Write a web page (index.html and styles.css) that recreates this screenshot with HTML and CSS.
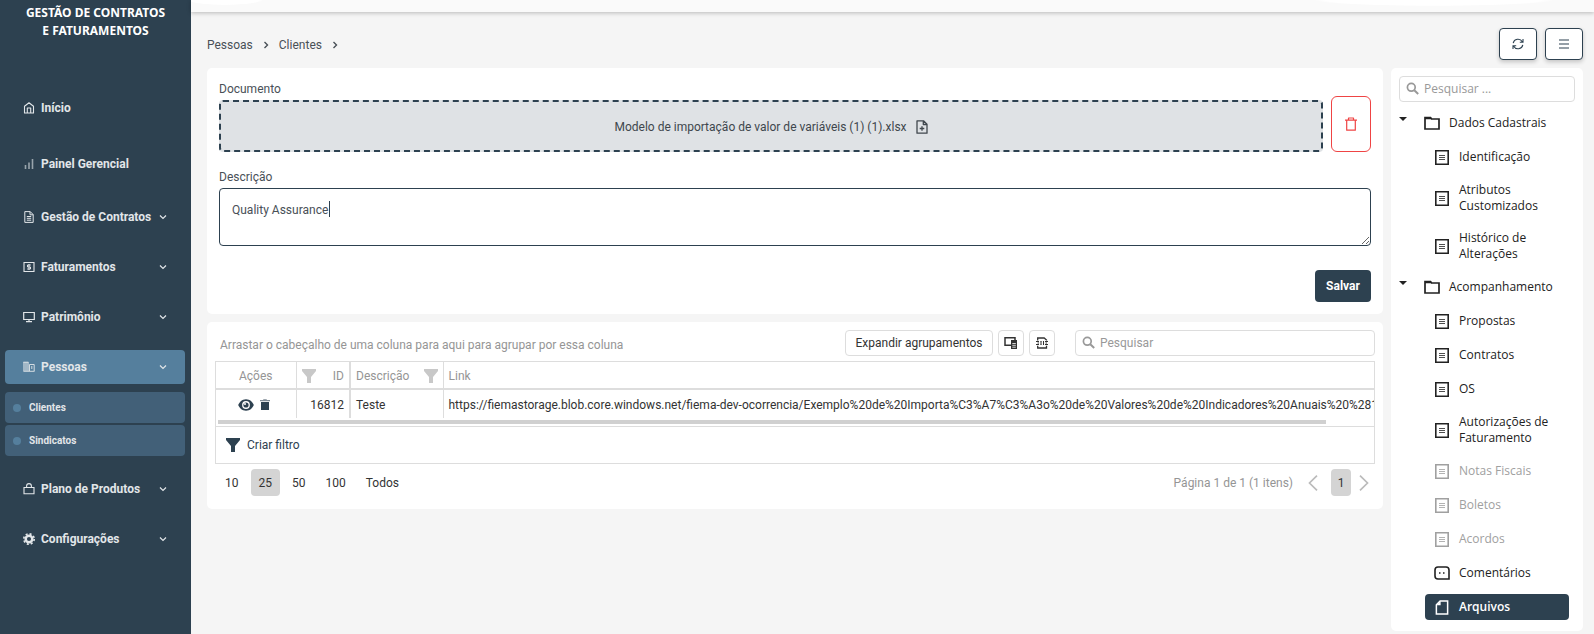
FILE: index.html
```html
<!DOCTYPE html>
<html lang="pt-BR">
<head>
<meta charset="utf-8">
<title>Gestão de Contratos e Faturamentos</title>
<link rel="stylesheet" href="styles.css">
</head>
<body>
<svg class="sprite" aria-hidden="true">
  <symbol id="chev" viewBox="0 0 10 10"><path d="M2 3.500 5 6.500 8 3.500" fill="none" stroke="currentColor" stroke-width="1.200"/></symbol>
  <symbol id="search" viewBox="0 0 14 14"><circle cx="5.300" cy="5.300" r="3.900" fill="none" stroke="currentColor" stroke-width="1.700"/><path d="M8.300 8.300 12.200 12" stroke="currentColor" stroke-width="2"/></symbol>
  <symbol id="funnel" viewBox="0 0 14 14"><path d="M0 0h14v2L9 8v6H5V8L0 2z" fill="currentColor"/></symbol>
  <symbol id="folder" viewBox="0 0 16 14"><path d="M1 1.500h5.500l1.200 1.500H15v10H1z" fill="none" stroke="currentColor" stroke-width="1.700"/><path d="M1 1h5.500l1.500 2.300H1z" fill="currentColor"/></symbol>
  <symbol id="doc" viewBox="0 0 14 15"><path d="M.8.8h12.400v13.400H.8z" fill="none" stroke="currentColor" stroke-width="1.600"/><path d="M4 5.500h6M4 7.500h6M4 9.500h6" stroke="currentColor" stroke-width=".8"/></symbol>
</svg>
<div class="app">
  <aside class="sidebar">
    <h1 class="brand">GESTÃO DE CONTRATOS<br>E FATURAMENTOS</h1>
    <nav class="menu">
      <a class="item tall" href="#"><svg class="ico" viewBox="0 0 12 12"><path d="M1.500 11V4.300L6 .8l4.500 3.500V11zM4.300 11V6h3.400v5" fill="none" stroke="currentColor" stroke-width="1.100" stroke-linejoin="round"/></svg><span>Início</span></a>
      <a class="item tall" href="#"><svg class="ico dim" viewBox="0 0 12 12"><path d="M2.500 7v4M6 4.500V11M9.500 1v10" stroke="currentColor" stroke-width="1.600"/></svg><span>Painel Gerencial</span></a>
      <a class="item" href="#"><svg class="ico" viewBox="0 0 12 12"><path d="M1.800 .6h5.400l3 3v7.800H1.800zM7 .6v3.200h3.200M3.800 5.500h4.400M3.800 7.300h4.400M3.800 9.200h4.400" fill="none" stroke="currentColor" stroke-width="1"/></svg><span>Gestão de Contratos</span><svg class="chev"><use href="#chev"/></svg></a>
      <a class="item" href="#"><svg class="ico" viewBox="0 0 12 12"><path d="M1 1.500h10v9H1z" fill="none" stroke="currentColor" stroke-width="1.100"/><path d="M7.800 4H4.500v2h3v2H4.200M6 3v6" fill="none" stroke="currentColor" stroke-width="1"/></svg><span>Faturamentos</span><svg class="chev"><use href="#chev"/></svg></a>
      <a class="item" href="#"><svg class="ico" viewBox="0 0 12 12"><path d="M.7 1.500h10.600v7H.7zM6 8.500v2M3 10.700h6" fill="none" stroke="currentColor" stroke-width="1.200"/></svg><span>Patrimônio</span><svg class="chev"><use href="#chev"/></svg></a>
      <a class="item active" href="#"><svg class="ico" viewBox="0 0 12 12"><path d="M1 1v9M3 1v9M5 1v9" stroke="currentColor" stroke-width="1.100"/><path d="M.4 1.200h5M.4 10.300h11.200M6.500 10V3.500h4.700V10M8.800 5v3" fill="none" stroke="currentColor" stroke-width=".9"/></svg><span>Pessoas</span><svg class="chev"><use href="#chev"/></svg></a>
      <div class="sub">
        <a class="subitem" href="#">Clientes</a>
        <a class="subitem" href="#">Sindicatos</a>
      </div>
      <a class="item" href="#"><svg class="ico" viewBox="0 0 12 12"><path d="M1 4.500h10v6.300H1zM3.600 4.500V3a2.400 2.400 0 0 1 4.800 0v1.500" fill="none" stroke="currentColor" stroke-width="1.100"/></svg><span>Plano de Produtos</span><svg class="chev"><use href="#chev"/></svg></a>
      <a class="item" href="#"><svg class="ico" viewBox="0 0 12 12"><circle cx="6" cy="6" r="3.300" fill="none" stroke="currentColor" stroke-width="2.500"/><circle cx="6" cy="6" r="5.200" fill="none" stroke="currentColor" stroke-width="1.600" stroke-dasharray="2.040 2.040"/></svg><span>Configurações</span><svg class="chev"><use href="#chev"/></svg></a>
    </nav>
  </aside>
  <div class="page">
    <header class="topbar"></header>
    <div class="crumbbar">
      <nav class="crumbs">
        <a href="#">Pessoas</a><svg class="crumb-sep" viewBox="0 0 10 10"><path d="M3.500 2 6.500 5 3.500 8" fill="none" stroke="currentColor" stroke-width="1.400"/></svg>
        <a href="#">Clientes</a><svg class="crumb-sep" viewBox="0 0 10 10"><path d="M3.500 2 6.500 5 3.500 8" fill="none" stroke="currentColor" stroke-width="1.400"/></svg>
      </nav>
      <div class="tools">
        <button class="tool" type="button" aria-label="Atualizar"><svg width="12" height="12" viewBox="0 0 12 12"><path d="M1.200 5.200A4.900 4.900 0 0 1 10.300 3.800M10.800 6.800A4.900 4.900 0 0 1 1.700 8.200M11 1v3.200H7.800M1 11V7.800h3.200" fill="none" stroke="currentColor" stroke-width="1.100"/></svg></button>
        <button class="tool" type="button" aria-label="Menu"><svg width="10" height="10" viewBox="0 0 10 10"><path d="M0 1h10M0 5h10M0 9h10" stroke="currentColor" stroke-width="1.100"/></svg></button>
      </div>
    </div>
    <div class="columns">
      <main class="content">
        <form class="card form">
          <label for="doc-file">Documento</label>
          <div class="file-row">
            <button class="dropzone" id="doc-file" type="button">Modelo de importação de valor de variáveis (1) (1).xlsx<svg width="12" height="14" viewBox="0 0 12 14"><path d="M1 .8h6.500L11 4.300v8.900H1zM7.300 1v3.500H11M6 6.200v4.600M3.700 8.500h4.600" fill="none" stroke="currentColor" stroke-width="1.300" stroke-linejoin="round"/></svg></button>
            <button class="remove" type="button" aria-label="Remover"><svg width="12" height="14" viewBox="0 0 12 14"><path d="M0 3.200h12M3.500 3V1h5v2M1.700 3.500v9.700h8.600V3.500" fill="none" stroke="currentColor" stroke-width="1.200" stroke-linejoin="round"/></svg></button>
          </div>
          <label for="descricao">Descrição</label>
          <div class="area"><textarea id="descricao">Quality Assurance</textarea><i class="text-caret"></i></div>
          <button class="save" type="submit">Salvar</button>
        </form>
        <section class="card grid">
          <div class="grid-tools">
            <span class="group-hint">Arrastar o cabeçalho de uma coluna para aqui para agrupar por essa coluna</span>
            <button class="gbtn" type="button">Expandir agrupamentos</button>
            <button class="gbtn square" type="button" aria-label="Selecionar colunas"><svg width="14" height="14" viewBox="0 0 14 14"><path d="M7 9.300H1V1.800h10V4" fill="none" stroke="currentColor" stroke-width="1.500"/><path d="M7 4h6v9H7z" fill="currentColor"/><path d="M8.300 7.500h3.500M8.300 9.300h3.500M8.300 11.200h3.500" stroke="#fff" stroke-width=".8"/></svg></button>
            <button class="gbtn square" type="button" aria-label="Exportar"><svg width="12" height="12" viewBox="0 0 12 12"><path d="M1.700 3.500V1h6.500l2.300 2v.5M1.700 8.800V11h8.800V8.800" fill="none" stroke="currentColor" stroke-width="1.300"/><path d="M0 4.500h3M4.500 4.500h1M7 4.500h1M9 4.500h3M0 7.500h3M4.500 7.500h1M7 7.500h1M9 7.500h3M1.500 6h1.500M5 4.500v3M7.500 4.500v3M9.500 6h1.500" stroke="currentColor" stroke-width="1"/></svg></button>
            <label class="searchbox grid-search"><svg class="mag"><use href="#search"/></svg><input type="text" placeholder="Pesquisar" aria-label="Pesquisar"></label>
          </div>
          <div class="table-box">
            <div class="table-view">
              <table>
                <thead><tr>
                  <th class="c-act">Ações</th>
                  <th class="c-id"><div class="head"><svg class="fun"><use href="#funnel"/></svg><span>ID</span></div></th>
                  <th class="c-desc"><div class="head"><span>Descrição</span><svg class="fun"><use href="#funnel"/></svg></div></th>
                  <th class="c-link">Link</th>
                </tr></thead>
                <tbody><tr>
                  <td class="c-act"><div class="acts"><button type="button" aria-label="Ver"><svg width="16" height="12" viewBox="0 0 16 12"><path d="M8 .3C4 .3 1.300 3.200.2 6 1.300 8.800 4 11.700 8 11.700S14.700 8.800 15.800 6C14.700 3.200 12 .3 8 .3z" fill="currentColor"/><circle cx="8" cy="6" r="3.900" fill="#fff"/><circle cx="8" cy="6" r="2.600" fill="currentColor"/><circle cx="7" cy="5" r="1" fill="#fff"/></svg></button><button type="button" aria-label="Excluir"><svg width="10" height="12" viewBox="0 0 10 12"><path d="M0 1h3L3.500.2h3L7 1h3v1.200H0z" fill="#7f8b95"/><path d="M1 3h8v8H1z" fill="currentColor"/></svg></button></div></td>
                  <td class="c-id">16812</td>
                  <td class="c-desc">Teste</td>
                  <td class="c-link">https://fiemastorage.blob.core.windows.net/fiema-dev-ocorrencia/Exemplo%20de%20Importa%C3%A7%C3%A3o%20de%20Valores%20de%20Indicadores%20Anuais%20%281%29.xlsx</td>
                </tr></tbody>
              </table>
            </div>
            <div class="scroll"><div class="thumb"></div></div>
            <div class="filter-row"><button type="button"><svg class="fun"><use href="#funnel"/></svg>Criar filtro</button></div>
          </div>
          <div class="pager">
            <div class="sizes"><button type="button">10</button><button class="on" type="button">25</button><button type="button">50</button><button type="button">100</button><button type="button">Todos</button></div>
            <div class="pages"><span>Página 1 de 1 (1 itens)</span><button class="nav" type="button" aria-label="Anterior"><svg width="10" height="16" viewBox="0 0 10 16"><path d="M9 .7 1.500 8 9 15.300" fill="none" stroke="currentColor" stroke-width="1.700"/></svg></button><button class="on num" type="button">1</button><button class="nav" type="button" aria-label="Próxima"><svg width="10" height="16" viewBox="0 0 10 16"><path d="M1 .7 8.500 8 1 15.300" fill="none" stroke="currentColor" stroke-width="1.700"/></svg></button></div>
          </div>
        </section>
      </main>
      <aside class="card side">
        <label class="searchbox"><svg class="mag"><use href="#search"/></svg><input type="text" placeholder="Pesquisar ..." aria-label="Pesquisar"></label>
        <nav class="tree">
          <button class="node parent" type="button"><i class="caret"></i><svg class="fold"><use href="#folder"/></svg>Dados Cadastrais</button>
          <a class="node" href="#"><svg class="docu"><use href="#doc"/></svg><span>Identificação</span></a>
          <a class="node two" href="#"><svg class="docu"><use href="#doc"/></svg><span>Atributos Customizados</span></a>
          <a class="node two" href="#"><svg class="docu"><use href="#doc"/></svg><span>Histórico de Alterações</span></a>
          <button class="node parent" type="button"><i class="caret"></i><svg class="fold"><use href="#folder"/></svg>Acompanhamento</button>
          <a class="node" href="#"><svg class="docu"><use href="#doc"/></svg><span>Propostas</span></a>
          <a class="node" href="#"><svg class="docu"><use href="#doc"/></svg><span>Contratos</span></a>
          <a class="node" href="#"><svg class="docu"><use href="#doc"/></svg><span>OS</span></a>
          <a class="node two" href="#"><svg class="docu"><use href="#doc"/></svg><span>Autorizações de Faturamento</span></a>
          <a class="node off" href="#"><svg class="docu"><use href="#doc"/></svg><span>Notas Fiscais</span></a>
          <a class="node off" href="#"><svg class="docu"><use href="#doc"/></svg><span>Boletos</span></a>
          <a class="node off" href="#"><svg class="docu"><use href="#doc"/></svg><span>Acordos</span></a>
          <a class="node" href="#"><svg class="docu wide" viewBox="0 0 16 14"><path d="M15 13H4a3 3 0 0 1-3-3V4a3 3 0 0 1 3-3h8a3 3 0 0 1 3 3z" fill="none" stroke="currentColor" stroke-width="1.600"/><path d="M5 6.300h1.500v1.500H5zM9 6.300h1.500v1.500H9z" fill="currentColor"/></svg><span>Comentários</span></a>
          <a class="node current" href="#"><svg class="docu" viewBox="0 0 14 16"><path d="M5 1h8v14H1V5z" fill="none" stroke="currentColor" stroke-width="1.600"/><path d="M1 5.500 5.500 1v4.500z" fill="currentColor"/></svg><span>Arquivos</span></a>
        </nav>
      </aside>
    </div>
  </div>
</div>
</body>
</html>
```
FILE: styles.css
```css
* { box-sizing: border-box; }
body {
  margin: 0;
  background: #f5f5f5;
  color: #495057;
  font: 12px/18px Roboto, "Open Sans", sans-serif;
}
a { color: inherit; text-decoration: none; }
button, input, textarea { font: inherit; color: inherit; margin: 0; }
button { padding: 0; border: 0; background: none; cursor: pointer; }
svg { flex: none; display: block; }
.sprite { width: 0; height: 0; position: absolute; }
.app { display: flex; min-height: 100vh; }

.sidebar { flex: none; width: 191px; background: #2d4150; color: #e2e6e9; font-weight: 700; }
.brand { margin: 0; padding-top: 4px; color: #fff; font: 700 12px/18px "Noto Sans", sans-serif; text-align: center; }
.menu { display: flex; flex-direction: column; padding: 40px 6px 0 5px; }
.item { display: flex; align-items: center; height: 34px; margin: 8px 0; padding: 0 17px 0 18px; border-radius: 4px; }
.item.tall { height: 40px; }
.item span { flex: 1; white-space: nowrap; margin-left: 6px; }
.item.active { background: #557f9d; }
.ico { width: 12px; height: 12px; }
.ico.dim { opacity: .6; }
.chev { width: 10px; height: 10px; }
.sub { display: flex; flex-direction: column; gap: 2px; margin-bottom: 8px; }
.subitem { display: flex; align-items: center; height: 31px; padding-left: 8px; border-radius: 4px; background: #426078; font-size: 10px; }
.subitem::before { content: ""; width: 8px; height: 8px; margin-right: 8px; border-radius: 50%; background: #557f9d; }

.page { flex: 1; min-width: 0; }
.topbar {
  height: 12px;
  background:
    radial-gradient(ellipse 38px 5px at 34px 0, #fff 90%, transparent),
    radial-gradient(ellipse 120px 6px at calc(100% - 160px) 0, #fff 90%, transparent),
    #fafafa;
  box-shadow: 0 1px 4px rgba(0, 0, 0, .25);
}
.crumbbar { display: flex; align-items: center; justify-content: space-between; padding: 16px 11px 8px 16px; }
.crumbs { display: flex; align-items: center; padding-top: 2px; }
.crumb-sep { width: 10px; height: 10px; margin: 0 8px; color: #495057; }
.tools { display: flex; gap: 8px; }
.tool { display: flex; align-items: center; justify-content: center; width: 38px; height: 32px; border: 1px solid #2d4150; border-radius: 4px; background: #fff; color: #2d4150; box-shadow: 0 2px 4px rgba(0, 0, 0, .2); }

.columns { display: flex; align-items: flex-start; gap: 8px; padding: 0 11px 3px 16px; }
.content { flex: 1; min-width: 0; display: flex; flex-direction: column; gap: 8px; }
.card { background: #fff; border-radius: 5px; }

.form { display: flex; flex-direction: column; padding: 12px; }
.file-row { display: flex; align-items: flex-end; gap: 8px; margin: -2px 0 16px; }
.dropzone { flex: 1; display: flex; align-items: center; justify-content: center; gap: 9px; height: 52px; padding-top: 1px; border: 2px dashed #2d4150; border-radius: 4px; background: #dfe2e5; color: #40474d; }
.remove { display: flex; align-items: center; justify-content: center; width: 40px; height: 56px; border: 1px solid #ef4444; border-radius: 6px; color: #ef4444; }
.area { position: relative; display: flex; margin: 2px 0 24px; }
.area textarea { flex: 1; height: 58px; padding: 12px; border: 1px solid #2d4150; border-radius: 4px; outline: 0; line-height: 18px; resize: vertical; }
.text-caret { position: absolute; left: 110px; top: 13px; width: 1px; height: 16px; background: #2d4150; }
.save { align-self: flex-end; width: 56px; height: 32px; border-radius: 4px; background: #2d4150; color: #fff; font-weight: 700; }

.grid { padding: 8px 8px 13px; }
.grid-tools { display: flex; align-items: center; gap: 5px; margin-bottom: 5px; }
.group-hint { flex: 1; padding: 3px 0 0 5px; color: #959595; }
.gbtn { display: flex; align-items: center; justify-content: center; width: 148px; height: 26px; border: 1px solid #ddd; border-radius: 4px; color: #333; }
.gbtn.square { width: 26px; }
.searchbox { display: flex; align-items: center; height: 26px; padding: 0 6px; border: 1px solid #ddd; border-radius: 4px; color: #999; }
.searchbox input { flex: 1; min-width: 0; padding: 0 0 0 4px; border: 0; outline: 0; background: none; }
.searchbox input::placeholder { color: #999; }
.grid-search { width: 300px; margin-left: 15px; }
.mag { width: 14px; height: 14px; }

.table-box { border: 1px solid #ddd; }
.table-view { overflow: hidden; }
table { width: 100%; border-collapse: collapse; table-layout: fixed; color: #333; }
th, td { padding: 5px 5px 4px; height: 29px; text-align: left; font-weight: 400; white-space: nowrap; border-right: 1px solid #ddd; }
th { height: 27px; padding-bottom: 3px; color: #959595; border-bottom: 2px solid #ddd; }
.c-act { width: 80px; text-align: center; }
.c-id { width: 54px; text-align: right; border-right-width: 2px; }
.c-desc { width: 93px; }
.c-link { border-right: 0; overflow: hidden; }
.head { display: flex; align-items: center; justify-content: space-between; }
.fun { width: 14px; height: 14px; }
.head .fun { color: #c8c8c8; }
.acts { display: flex; justify-content: center; gap: 6px; padding-right: 4px; color: #2d4150; }
.scroll { padding: 2px; border-bottom: 1px solid #ddd; }
.thumb { width: 96%; height: 4px; background: #d0d0d0; }
.filter-row { display: flex; align-items: center; height: 36px; padding-left: 10px; color: #2d4150; }
.filter-row button { display: flex; align-items: center; gap: 7px; }

.pager { display: flex; justify-content: space-between; padding-top: 5px; color: #333; }
.sizes, .pages { display: flex; align-items: center; }
.sizes { gap: 4px; padding-left: 2px; }
.sizes button { height: 27px; padding: 0 8px; border-radius: 4px; }
.pager .on { background: #d4d4d4; }
.pages { color: #959595; padding-right: 6px; }
.pages .nav { margin-left: 15px; color: #bbb; }
.pages .num { width: 20px; height: 27px; margin-left: 13px; border-radius: 4px; color: #333; }
.pages .num + .nav { margin-left: 8px; }

.side { width: 192px; padding: 8px 8px 7px; font-family: "Open Sans", sans-serif; }
.side .searchbox { width: 176px; }
.tree { display: flex; flex-direction: column; margin: 4px 6px 0 0; color: #222; line-height: 16px; }
.node { display: flex; align-items: center; min-height: 26px; margin: 4px 0 4px 26px; padding: 0 10px; border-radius: 4px; text-align: left; }
.node span { margin-left: 10px; }
.node.two { min-height: 32px; margin-top: 8px; margin-bottom: 8px; }
.node.parent { margin-left: 0; padding: 0; }
.caret { border: 4px solid transparent; border-top-color: #222; border-bottom: 0; margin: 0 17px 8px 0; }
.fold { width: 16px; height: 14px; margin-right: 9px; }
.docu { width: 14px; height: 15px; }
.docu.wide { width: 16px; height: 14px; margin: 0 -1px; }
.node.off { color: #a0a0a0; }
.node.current { background: #2d4150; color: #fff; font-weight: 600; }
```
